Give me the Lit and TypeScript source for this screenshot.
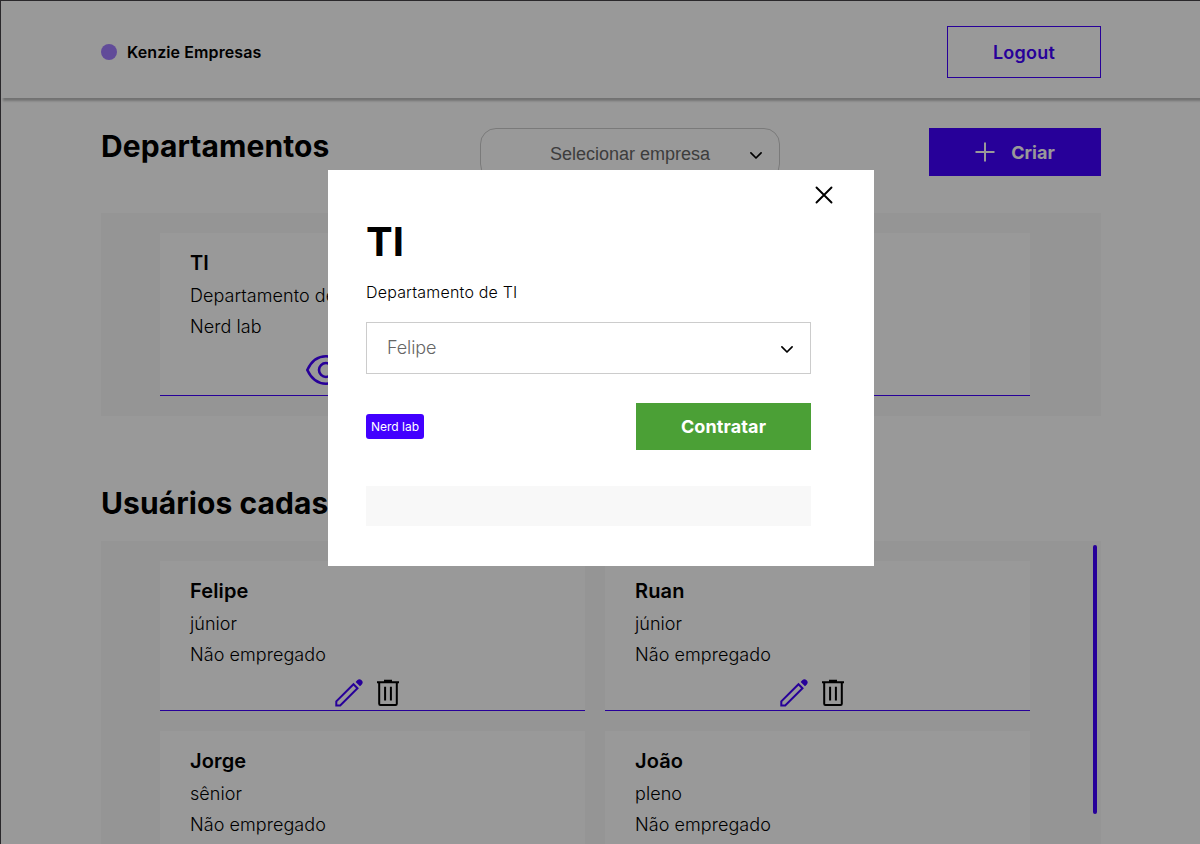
import { LitElement, html, css } from "lit";
import { customElement } from "lit/decorators.js";

const chevron = html`<svg class="chevron" width="14" height="14" viewBox="0 0 14 14" fill="none" stroke="#000" stroke-width="1.7" stroke-linecap="round" stroke-linejoin="round"><path d="M1.9 4.900 7 10l5.100-5.100" /></svg>`;

const eye = html`<svg width="42" height="32" viewBox="0 0 42 32" fill="none" stroke="#4200ff" stroke-width="2.600"><path d="M2.300 16C6.500 7 13 2.300 21 2.300S35.500 7 39.700 16C35.500 25 29 29.700 21 29.700S6.500 25 2.300 16Z" /><circle cx="21" cy="16" r="7" /></svg>`;

const pencil = html`<svg width="28" height="28" viewBox="0 0 28 28"><path d="M1.300 26.500V22.400L18.500 5.200l4 4L5.200 26.500Z" fill="none" stroke="#4200ff" stroke-width="2" /><path d="M20.600 2.900 22.200 1.300a3 3 0 0 1 4.400 4.400L25 7.300Z" fill="#4200ff" /></svg>`;

const trash = html`<svg width="24" height="28" viewBox="0 0 24 28" fill="none" stroke="#000" stroke-width="2"><path d="M1 3.200h22M8 1.800h8M3.200 3.200v21.600q0 1.200 1.200 1.200h15.200q1.200 0 1.200-1.200V3.200" /><path d="M9.100 7.700v13.900M14.900 7.700v13.900" /></svg>`;

const users = [
  { name: "Felipe", level: "júnior" },
  { name: "Ruan", level: "júnior" },
  { name: "Jorge", level: "sênior" },
  { name: "João", level: "pleno" },
];

@customElement("app-root")
export class AppRoot extends LitElement {
  static styles = css`
    :host { display: block; font-family: Inter, sans-serif; color: #000; }
    * { box-sizing: border-box; }
    h1, h2, h3, p, ul { margin: 0; padding: 0; }
    svg { display: block; flex: none; }
    button { font-family: inherit; margin: 0; padding: 0; border-radius: 0; }
    .page { position: relative; height: 844px; overflow: hidden; background: #fff; border-top: 1px solid #2a282b; border-left: 1px solid #2a282b; }
    .header { height: 97px; padding: 25px 99px 20px 100px; display: flex; justify-content: space-between; align-items: center; box-shadow: 2px 3px 2px rgba(0, 0, 0, 0.25); }
    .brand { display: flex; align-items: center; gap: 10px; font-size: 16px; font-weight: 600; line-height: 20px; letter-spacing: 0.1px; }
    .dot { width: 16px; height: 16px; border-radius: 50%; background: #a27eff; }
    .logout { width: 154px; height: 52px; border: 1px solid #4200ff; background: transparent; color: #4200ff; font-size: 18px; font-weight: 600; letter-spacing: 0.25px; }
    .main { padding: 30px 99px 0 100px; }
    .top { display: grid; grid-template-columns: 379px 300px 1fr; height: 85px; align-items: start; }
    h2 { font-size: 30px; font-weight: 700; line-height: 36px; letter-spacing: 0.08px; }
    .select { display: flex; align-items: center; border: 1px solid #ccc; height: 52px; font-weight: 300; font-size: 18px; color: #666; }
    .chevron { margin-top: 1px; }
    .select.company { width: 300px; border-radius: 16px; padding: 0 16px; font-family: "Liberation Sans", Arial, sans-serif; font-weight: 400; }
    .select.company span { flex: 1; text-align: center; padding: 1px 0 0 14px; }
    .create { justify-self: end; width: 172px; height: 48px; border: 0; background: #4200ff; color: #fff; font-size: 18px; font-weight: 700; display: flex; align-items: center; justify-content: center; gap: 16px; }
    .panel { background: #f8f8f8; padding: 20px 71px 20px 59px; display: grid; gap: 20px; }
    .panel.dept { height: 203px; margin-bottom: 69px; }
    .panel.users { position: relative; grid-template-columns: 1fr 1fr; grid-auto-rows: 150px; margin-top: 20px; height: 380px; }
    .thumb { position: absolute; right: 4px; top: 4px; width: 4px; height: 269px; border-radius: 2px; background: #4200ff; }
    .card { background: #fff; border-bottom: 1px solid #4200ff; padding: 18px 30px 0; }
    h3 { font-size: 20px; font-weight: 600; line-height: 24px; margin-bottom: 5px; letter-spacing: 0.12px; }
    .card p { font-size: 18px; font-weight: 300; line-height: 31px; letter-spacing: 0.06px; }
    .actions { display: flex; align-items: center; justify-content: center; gap: 13px; width: 355px; height: 28px; margin-top: 9px; }
    .dept .actions { width: 352px; gap: 14px; height: 32px; margin-top: 12px; }
    .overlay { position: absolute; inset: 0; background: rgba(0, 0, 0, 0.4); }
    .modal { position: absolute; left: 327px; top: 169px; width: 546px; height: 396px; background: #fff; padding: 15px 63px 0 38px; }
    .close { display: flex; justify-content: flex-end; margin-right: -23px; }
    h1 { font-size: 40px; font-weight: 700; line-height: 48px; margin-top: 13px; }
    .desc { font-size: 16px; font-weight: 300; line-height: 20px; margin: 16px 0 20px; letter-spacing: 0.19px; }
    .select.member { justify-content: space-between; padding: 0 16px 0 20px; letter-spacing: -0.1px; }
    .select.member span { padding-bottom: 1px; }
    .row { display: flex; align-items: center; justify-content: space-between; margin-top: 29px; height: 47px; }
    .tag { background: #4200ff; color: #fff; font-size: 12px; line-height: 15px; padding: 5px; border-radius: 3px; }
    .hire { width: 175px; height: 47px; border: 0; background: #4ba036; color: #fff; font-size: 18px; font-weight: 700; letter-spacing: 0.12px; }
    .members { margin-top: 36px; height: 40px; background: #f8f8f8; }
  `;

  render() {
    return html`
      <div class="page">
        <header class="header">
          <div class="brand"><span class="dot"></span><span>Kenzie Empresas</span></div>
          <button class="logout">Logout</button>
        </header>
        <main class="main">
          <div class="top">
            <h2>Departamentos</h2>
            <div class="select company"><span>Selecionar empresa</span>${chevron}</div>
            <button class="create">
              <svg width="20" height="20" viewBox="0 0 20 20" stroke="#fff" stroke-width="2"><path d="M.5 10h19M10 .5v19" /></svg>
              <span>Criar</span>
            </button>
          </div>
          <section class="panel dept">
            <article class="card">
              <h3>TI</h3>
              <p>Departamento de TI</p>
              <p>Nerd lab</p>
              <div class="actions">${eye}${pencil}${trash}</div>
            </article>
          </section>
          <h2>Usuários cadastrados</h2>
          <section class="panel users">
            ${users.map((u) => html`
              <article class="card">
                <h3>${u.name}</h3>
                <p>${u.level}</p>
                <p>Não empregado</p>
                <div class="actions">${pencil}${trash}</div>
              </article>`)}
            <div class="thumb"></div>
          </section>
        </main>
        <div class="overlay"></div>
        <div class="modal">
          <div class="close">
            <svg width="20" height="20" viewBox="0 0 20 20" stroke="#000" stroke-width="1.900" stroke-linecap="round"><path d="m2.500 2.500 15 15M17.500 2.500l-15 15" /></svg>
          </div>
          <h1>TI</h1>
          <p class="desc">Departamento de TI</p>
          <div class="select member"><span>Felipe</span>${chevron}</div>
          <div class="row"><span class="tag">Nerd lab</span><button class="hire">Contratar</button></div>
          <div class="members"></div>
        </div>
      </div>`;
  }
}
